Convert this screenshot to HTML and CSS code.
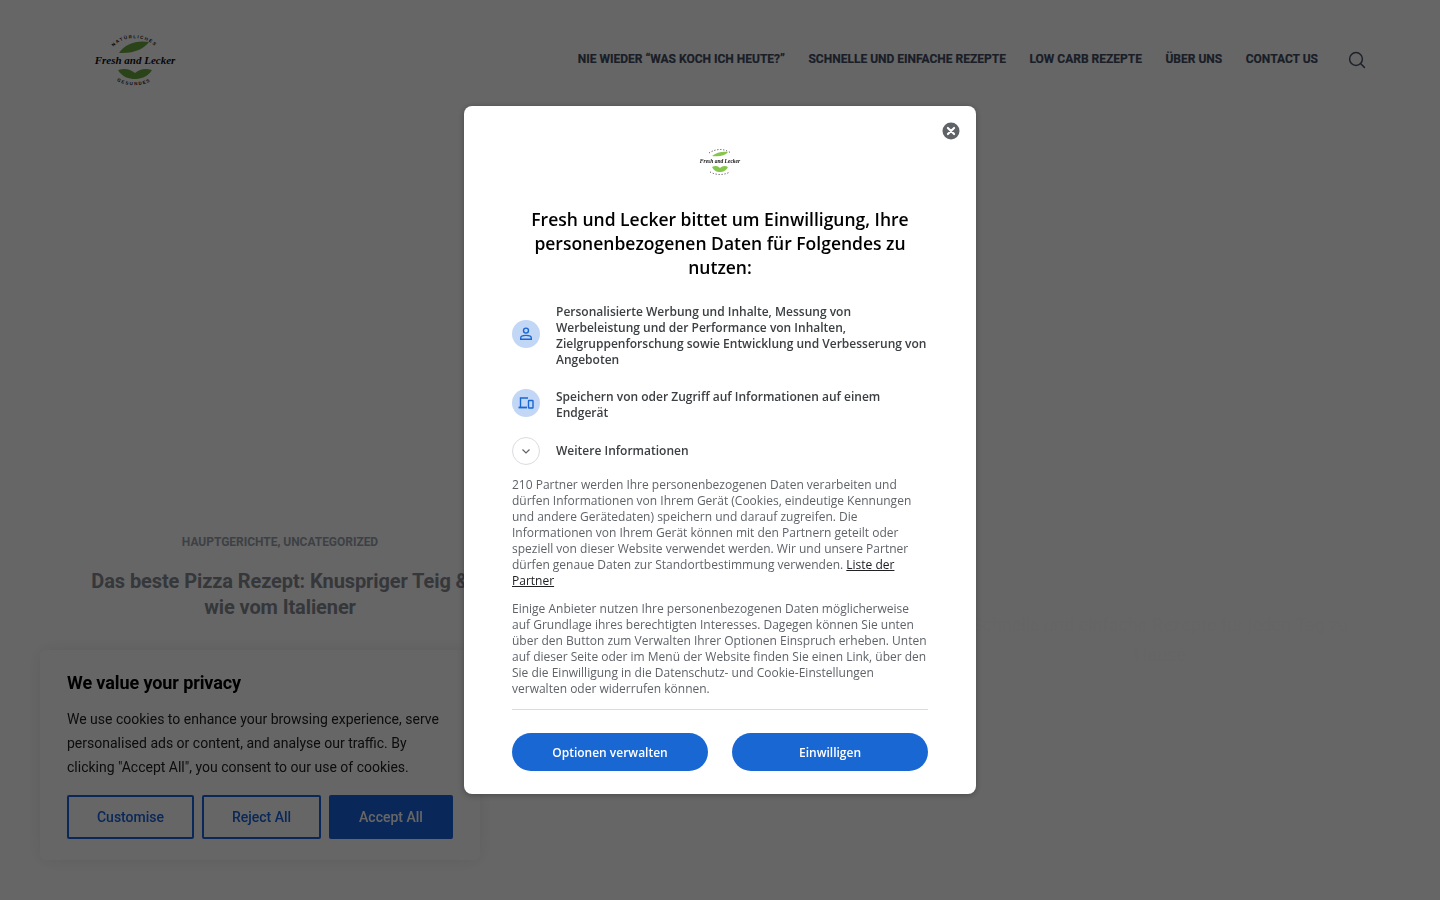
FILE: index.html
```html
<!DOCTYPE html>
<html lang="de">
<head>
<meta charset="utf-8">
<title>Fresh and Lecker</title>
<link rel="stylesheet" href="styles.css">
</head>
<body>
<header class="site-header">
  <a class="site-logo" href="#">
    <svg width="82" height="54" viewBox="0 0 82 54">
      <path id="a1" d="M19 14C26 1 54 1 62 14" fill="none"/>
      <text class="logo-small"><textPath href="#a1" startOffset="50%" text-anchor="middle">NATÜRLICHES</textPath></text>
      <path d="M25 19C31 10 42 6 55 8C51 14 40 20 25 19Z" fill="#6da83f"/>
      <text class="logo-script" x="41" y="30" text-anchor="middle">Fresh and Lecker</text>
      <path d="M24 36C31 34 36 35 41 39C46 35 51 34 58 36C54 43 46 45 41 45C35 45 28 43 24 36Z" fill="#6da83f"/>
      <path id="a2" d="M22 46C30 53 50 53 58 46" fill="none"/>
      <text class="logo-small"><textPath href="#a2" startOffset="50%" text-anchor="middle">GESUNDES</textPath></text>
    </svg>
  </a>
  <nav class="site-nav">
    <a href="#">NIE WIEDER “WAS KOCH ICH HEUTE?”</a>
    <a href="#">SCHNELLE UND EINFACHE REZEPTE</a>
    <a href="#">LOW CARB REZEPTE</a>
    <a href="#">ÜBER UNS</a>
    <a href="#">CONTACT US</a>
  </nav>
  <svg class="search-icon" width="18" height="18" viewBox="0 0 18 18" fill="none" stroke="#4a5568" stroke-width="1.500" stroke-linecap="round">
    <circle cx="8" cy="8" r="6.400"/><path d="M12.800 12.800L16.400 16.400"/>
  </svg>
</header>

<main class="posts">
  <article class="post post-main">
    <div class="post-cat">HAUPTGERICHTE, UNCATEGORIZED</div>
    <h2 class="post-title">Das beste Pizza Rezept: Knuspriger Teig &amp; wie vom Italiener</h2>
  </article>
  <article class="post"></article>
  <article class="post post-faint">
    <h2 class="post-title-faint">Schnelle und einfache Rezepte für jeden Tag zu Hause</h2>
  </article>
</main>

<aside class="cookie-box">
  <h3 class="cookie-title">We value your privacy</h3>
  <p class="cookie-text">We use cookies to enhance your browsing experience, serve personalised ads or content, and analyse our traffic. By clicking "Accept All", you consent to our use of cookies.</p>
  <div class="cookie-actions">
    <button class="ck-btn ck-custom">Customise</button>
    <button class="ck-btn ck-reject">Reject All</button>
    <button class="ck-btn ck-accept">Accept All</button>
  </div>
</aside>

<div class="overlay">
  <div class="modal">
    <button class="modal-close" aria-label="Schließen">
      <svg width="18" height="18" viewBox="0 0 18 18"><circle cx="9" cy="9" r="8.500" fill="#5f6368"/><path d="M5.900 5.900L12.100 12.100M12.100 5.900L5.900 12.100" stroke="#fff" stroke-width="2.100" stroke-linecap="round"/></svg>
    </button>
    <div class="modal-logo">
      <svg width="42" height="28" viewBox="0 0 42 28">
        <path d="M10 6Q21 -1 32 6" fill="none" stroke="#333" stroke-width="1" stroke-dasharray="1 2"/>
        <path d="M13 9C17 5 25 4 29 5C26 9 20 10 13 9Z" fill="#86c64c"/>
        <text class="modal-logo-text" x="21" y="16" text-anchor="middle">Fresh and Lecker</text>
        <path d="M13 20C17 18 19 19 21 21C23 19 26 18 29 20C27 24 24 25 21 25C18 25 15 24 13 20Z" fill="#86c64c"/>
        <path d="M11 25Q21 30 31 25" fill="none" stroke="#333" stroke-width="1" stroke-dasharray="1 2"/>
      </svg>
    </div>
    <h1 class="modal-title">Fresh und Lecker bittet um Einwilligung, Ihre personenbezogenen Daten für Folgendes zu nutzen:</h1>
    <div class="purpose purpose-first">
      <span class="purpose-icon">
        <svg width="16" height="16" viewBox="0 0 16 16" fill="none" stroke="#1967d2" stroke-width="1.400"><circle cx="8" cy="4.600" r="2.500"/><path d="M2.700 13.300V12C2.700 10.400 5 9.400 8 9.400S13.300 10.400 13.300 12V13.300Z"/></svg>
      </span>
      <span class="purpose-text">Personalisierte Werbung und Inhalte, Messung von Werbeleistung und der Performance von Inhalten, Zielgruppenforschung sowie Entwicklung und Verbesserung von Angeboten</span>
    </div>
    <div class="purpose purpose-second">
      <span class="purpose-icon">
        <svg width="16" height="16" viewBox="0 0 16 16" fill="none" stroke="#1967d2" stroke-width="1.400"><path d="M10 3H2.500V12"/><path d="M0.500 12.500H9" stroke-width="1.800"/><rect x="10.500" y="5.500" width="4.500" height="7.500" rx=".6"/></svg>
      </span>
      <span class="purpose-text">Speichern von oder Zugriff auf Informationen auf einem Endgerät</span>
    </div>
    <div class="purpose purpose-more">
      <span class="more-icon">
        <svg width="12" height="12" viewBox="0 0 12 12" fill="none" stroke="#5f6368" stroke-width="1.200"><path d="M2.500 4.500L6 8L9.500 4.500"/></svg>
      </span>
      <span class="purpose-text">Weitere Informationen</span>
    </div>
    <p class="modal-para">210 Partner werden Ihre personenbezogenen Daten verarbeiten und dürfen Informationen von Ihrem Gerät (Cookies, eindeutige Kennungen und andere Gerätedaten) speichern und darauf zugreifen. Die Informationen von Ihrem Gerät können mit den Partnern geteilt oder speziell von dieser Website verwendet werden. Wir und unsere Partner dürfen genaue Daten zur Standortbestimmung verwenden. <a href="#">Liste der Partner</a></p>
    <p class="modal-para">Einige Anbieter nutzen Ihre personenbezogenen Daten möglicherweise auf Grundlage ihres berechtigten Interesses. Dagegen können Sie unten über den Button zum Verwalten Ihrer Optionen Einspruch erheben. Unten auf dieser Seite oder im Menü der Website finden Sie einen Link, über den Sie die Einwilligung in die Datenschutz- und Cookie-Einstellungen verwalten oder widerrufen können.</p>
    <div class="modal-actions">
      <button class="fc-btn">Optionen verwalten</button>
      <button class="fc-btn">Einwilligen</button>
    </div>
  </div>
</div>
</body>
</html>
```
FILE: styles.css
```css
* { box-sizing: border-box; }
html, body { margin: 0; height: 100%; }
body {
  background: #fff;
  font-family: Roboto, "Liberation Sans", sans-serif;
  overflow: hidden;
  height: 900px;
}
button { font-family: inherit; cursor: pointer; }

/* Header */
.site-header {
  display: flex;
  align-items: flex-start;
  height: 118px;
  padding: 34px 74px 0 94px;
}
.site-logo { display: block; width: 82px; height: 54px; }
.site-logo svg { display: block; }
.logo-small {
  font: 700 4.500px "Liberation Sans", sans-serif;
  letter-spacing: 1.300px;
  fill: #222;
}
.logo-script {
  font: italic 700 11px "Liberation Serif", serif;
  fill: #111;
}
.site-nav {
  display: flex;
  gap: 23.500px;
  margin-left: auto;
  padding-top: 17px;
}
.site-nav a {
  color: #3f4d63;
  font-size: 12px;
  font-weight: 700;
  line-height: 16px;
  text-decoration: none;
  white-space: nowrap;
  -webkit-text-stroke: 0.2px #3f4d63;
}
.search-icon { margin: 17px 0 0 30px; }

/* Posts */
.posts {
  display: grid;
  grid-template-columns: repeat(3, 440px);
  padding: 416px 60px 0;
}
.post { text-align: center; }
.post-main { padding: 0 20px; }
.post-cat {
  color: #9aa2ad;
  font-size: 12px;
  font-weight: 700;
  line-height: 16px;
  letter-spacing: -0.03px;
}
.post-title {
  margin: 18px 0 0;
  color: #868b94;
  font-size: 20px;
  font-weight: 700;
  line-height: 26px;
  letter-spacing: -0.1px;
}
.post-faint { padding: 0 20px; }
.post-title-faint {
  margin: 76px 0 0;
  color: #fcfcfc;
  font-size: 18px;
  font-weight: 400;
  line-height: 30px;
}

/* Cookie notice */
.cookie-box {
  position: fixed;
  left: 40px;
  top: 650px;
  width: 440px;
  height: 210px;
  padding: 20px 27px;
  background: #fff;
  border-radius: 6px;
  box-shadow: 0 0 18px rgba(0, 0, 0, .09);
}
.cookie-title {
  margin: 0;
  color: #000;
  font-size: 18px;
  font-weight: 700;
  line-height: 26px;
  letter-spacing: -0.1px;
}
.cookie-text {
  margin: 11px 0 0;
  color: #212121;
  font-size: 14px;
  line-height: 24px;
}
.cookie-actions {
  display: flex;
  gap: 8px;
  margin-top: 16px;
}
.ck-btn {
  height: 44px;
  padding: 0;
  border: 2px solid #1863dc;
  border-radius: 2px;
  font-size: 14px;
  font-weight: 500;
}
.ck-custom { width: 127px; background: #fff; color: #1863dc; }
.ck-reject { width: 119px; background: #fff; color: #1863dc; }
.ck-accept { width: 124px; background: #1863dc; color: #fff; }

/* Consent overlay */
.overlay {
  position: fixed;
  inset: 0;
  display: flex;
  justify-content: center;
  align-items: flex-start;
  padding-top: 106px;
  background: rgba(0, 0, 0, .6);
}
.modal {
  position: relative;
  width: 512px;
  height: 688px;
  padding: 41px 48px 0;
  background: #fff;
  border-radius: 8px;
  box-shadow: 0 1px 6px rgba(0, 0, 0, .3);
  font-family: "Open Sans", "Noto Sans", sans-serif;
  color: #202124;
}
.modal-close {
  position: absolute;
  top: 16px;
  right: 16px;
  width: 18px;
  height: 18px;
  padding: 0;
  border: 0;
  background: none;
  line-height: 0;
}
.modal-logo { display: flex; justify-content: center; height: 28px; }
.modal-logo-text {
  font: italic 700 5.500px "Liberation Serif", serif;
  fill: #111;
}
.modal-title {
  margin: 32px 0 0;
  font-size: 17.500px;
  font-weight: 600;
  line-height: 24px;
  text-align: center;
  color: #000;
}
.purpose {
  display: flex;
  align-items: center;
  gap: 16px;
}
.purpose-first { margin-top: 25px; }
.purpose-second { margin-top: 21px; }
.purpose-more { margin-top: 16px; }
.purpose-text {
  flex: 1;
  font-size: 12px;
  font-weight: 600;
  line-height: 16px;
  color: #3c4043;
}
.purpose-icon, .more-icon {
  flex: none;
  display: flex;
  align-items: center;
  justify-content: center;
  width: 28px;
  height: 28px;
  border-radius: 50%;
}
.purpose-icon { background: #c2d7f5; margin-bottom: 4px; }
.more-icon { border: 1px solid #dadce0; background: #fff; }
.modal-para {
  margin: 12px 0 0;
  font-size: 12px;
  line-height: 16px;
  color: #5f6368;
}
.modal-para a { color: #202124; }
.modal-actions {
  display: flex;
  gap: 24px;
  margin-top: 12px;
  padding-top: 23px;
  border-top: 1px solid #dadce0;
}
.fc-btn {
  flex: 1;
  height: 38px;
  border: 0;
  border-radius: 19px;
  background: #1967d2;
  color: #fff;
  font-family: inherit;
  font-size: 12px;
  font-weight: 600;
}
```
